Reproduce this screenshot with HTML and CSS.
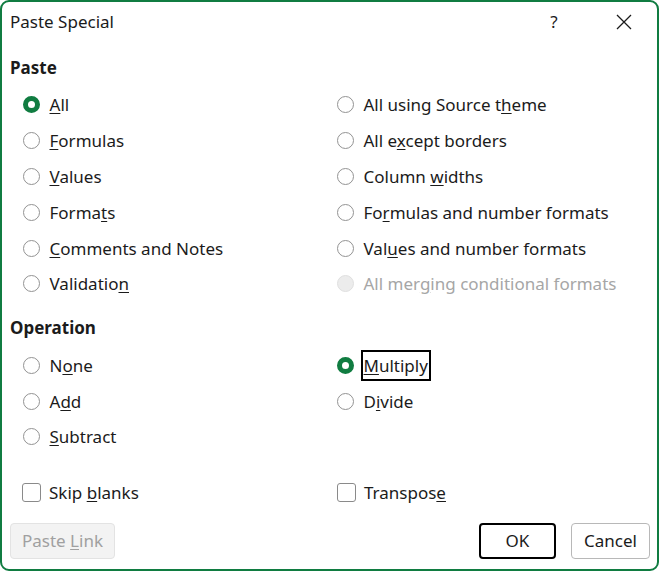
FILE: index.html
```html
<!DOCTYPE html>
<html lang="en">
<head>
    <meta charset="UTF-8">
    <meta name="viewport" content="width=device-width, initial-scale=1.0">
    <title>Paste Special</title>
    <link rel="stylesheet" href="styles.css">
</head>
<body>
    <div class="dialog">
        <div class="titlebar">
            <span class="title">Paste Special</span>
            <span class="help">?</span>
            <span class="close">
                <svg width="16" height="16" viewBox="0 0 16 16">
                    <path d="M1 1 L15 15 M15 1 L1 15" stroke="#1b1b1b" stroke-width="1.3" fill="none"/>
                </svg>
            </span>
        </div>

        <h2 class="section-title">Paste</h2>
        <div class="options paste-options">
            <label class="option"><span class="radio checked"></span><span><u>A</u>ll</span></label>
            <label class="option"><span class="radio"></span><span>All using Source t<u>h</u>eme</span></label>
            <label class="option"><span class="radio"></span><span><u>F</u>ormulas</span></label>
            <label class="option"><span class="radio"></span><span>All e<u>x</u>cept borders</span></label>
            <label class="option"><span class="radio"></span><span><u>V</u>alues</span></label>
            <label class="option"><span class="radio"></span><span>Column <u>w</u>idths</span></label>
            <label class="option"><span class="radio"></span><span>Forma<u>t</u>s</span></label>
            <label class="option"><span class="radio"></span><span>Fo<u>r</u>mulas and number formats</span></label>
            <label class="option"><span class="radio"></span><span><u>C</u>omments and Notes</span></label>
            <label class="option"><span class="radio"></span><span>Val<u>u</u>es and number formats</span></label>
            <label class="option"><span class="radio"></span><span>Validatio<u>n</u></span></label>
            <label class="option disabled"><span class="radio"></span><span>All mer<u>g</u>ing conditional formats</span></label>
        </div>

        <h2 class="section-title operation-title">Operation</h2>
        <div class="options op-options">
            <label class="option"><span class="radio"></span><span>N<u>o</u>ne</span></label>
            <label class="option"><span class="radio checked"></span><span class="focused"><u>M</u>ultiply</span></label>
            <label class="option"><span class="radio"></span><span>A<u>d</u>d</span></label>
            <label class="option"><span class="radio"></span><span>D<u>i</u>vide</span></label>
            <label class="option"><span class="radio"></span><span><u>S</u>ubtract</span></label>
        </div>

        <div class="options checks">
            <label class="option"><span class="checkbox"></span><span>Skip <u>b</u>lanks</span></label>
            <label class="option"><span class="checkbox"></span><span>Transpos<u>e</u></span></label>
        </div>

        <div class="buttons">
            <button class="btn disabled-btn">Paste <u>L</u>ink</button>
            <span class="spacer"></span>
            <button class="btn default-btn">OK</button>
            <button class="btn">Cancel</button>
        </div>
    </div>
</body>
</html>
```

FILE: styles.css
```css
html, body {
    margin: 0;
    padding: 0;
    background: #ffffff;
}
body {
    font-family: "Noto Sans", "Open Sans", sans-serif;
    font-size: 17px;
    color: #1b1b1b;
}
.dialog {
    box-sizing: border-box;
    width: 659px;
    height: 571px;
    border: 2px solid #107c41;
    border-radius: 9px;
    padding: 0 7px 10px 8px;
    display: flex;
    flex-direction: column;
}
.titlebar {
    height: 39px;
    display: flex;
    align-items: center;
}
.title {
    flex: 1;
    font-size: 17px;
}
.help {
    width: 20px;
    text-align: center;
    margin-right: 52px;
}
.close {
    display: flex;
    margin-right: 18px;
}
.section-title {
    margin: 13px 0 0 0;
    font-size: 17px;
    font-weight: bold;
    line-height: 28px;
}
.operation-title {
    margin-top: 12px;
}
.options {
    display: grid;
    grid-template-columns: 314px 1fr;
    padding-left: 13px;
}
.paste-options {
    margin-top: 5px;
    grid-auto-rows: 35.8px;
}
.op-options {
    margin-top: 6px;
    grid-auto-rows: 35.6px;
}
.checks {
    margin-top: 20px;
    grid-auto-rows: 36px;
    padding-left: 12px;
}
.option {
    display: flex;
    align-items: center;
    gap: 9.5px;
    white-space: nowrap;
}
.option u {
    text-underline-offset: 2px;
}
.radio {
    box-sizing: border-box;
    width: 17px;
    height: 17px;
    border: 1.5px solid #939393;
    border-radius: 50%;
    background: #ffffff;
    flex-shrink: 0;
}
.radio.checked {
    border: 5.5px solid #107c41;
}
.disabled {
    color: #a6a6a6;
}
.disabled .radio {
    border: 1px solid #e0e0e0;
    background: #ececec;
}
.focused {
    display: inline-block;
    line-height: 25px;
    outline: 2px solid #000000;
    outline-offset: 1px;
}
.checkbox {
    box-sizing: border-box;
    width: 19px;
    height: 19px;
    border: 1px solid #8a8a8a;
    border-radius: 3px;
    background: #ffffff;
    flex-shrink: 0;
}
.checks .option {
    gap: 8px;
}
.checks .option:nth-child(2) {
    padding-left: 1px;
}
.buttons {
    margin-top: 12px;
    display: flex;
    gap: 15px;
}
.spacer {
    flex: 1;
}
.btn {
    box-sizing: border-box;
    height: 36px;
    min-width: 79px;
    padding: 0 8px;
    font-family: inherit;
    font-size: 17px;
    white-space: nowrap;
    color: #1b1b1b;
    background: #ffffff;
    border: 1px solid #b8b8b8;
    border-radius: 4px;
}
.btn u {
    text-underline-offset: 2px;
}
.disabled-btn {
    width: 105px;
    color: #a0a0a0;
    background: #f3f3f3;
    border-color: #e3e3e3;
}
.default-btn {
    width: 77px;
    min-width: 0;
    border: 2px solid #000000;
}
```
